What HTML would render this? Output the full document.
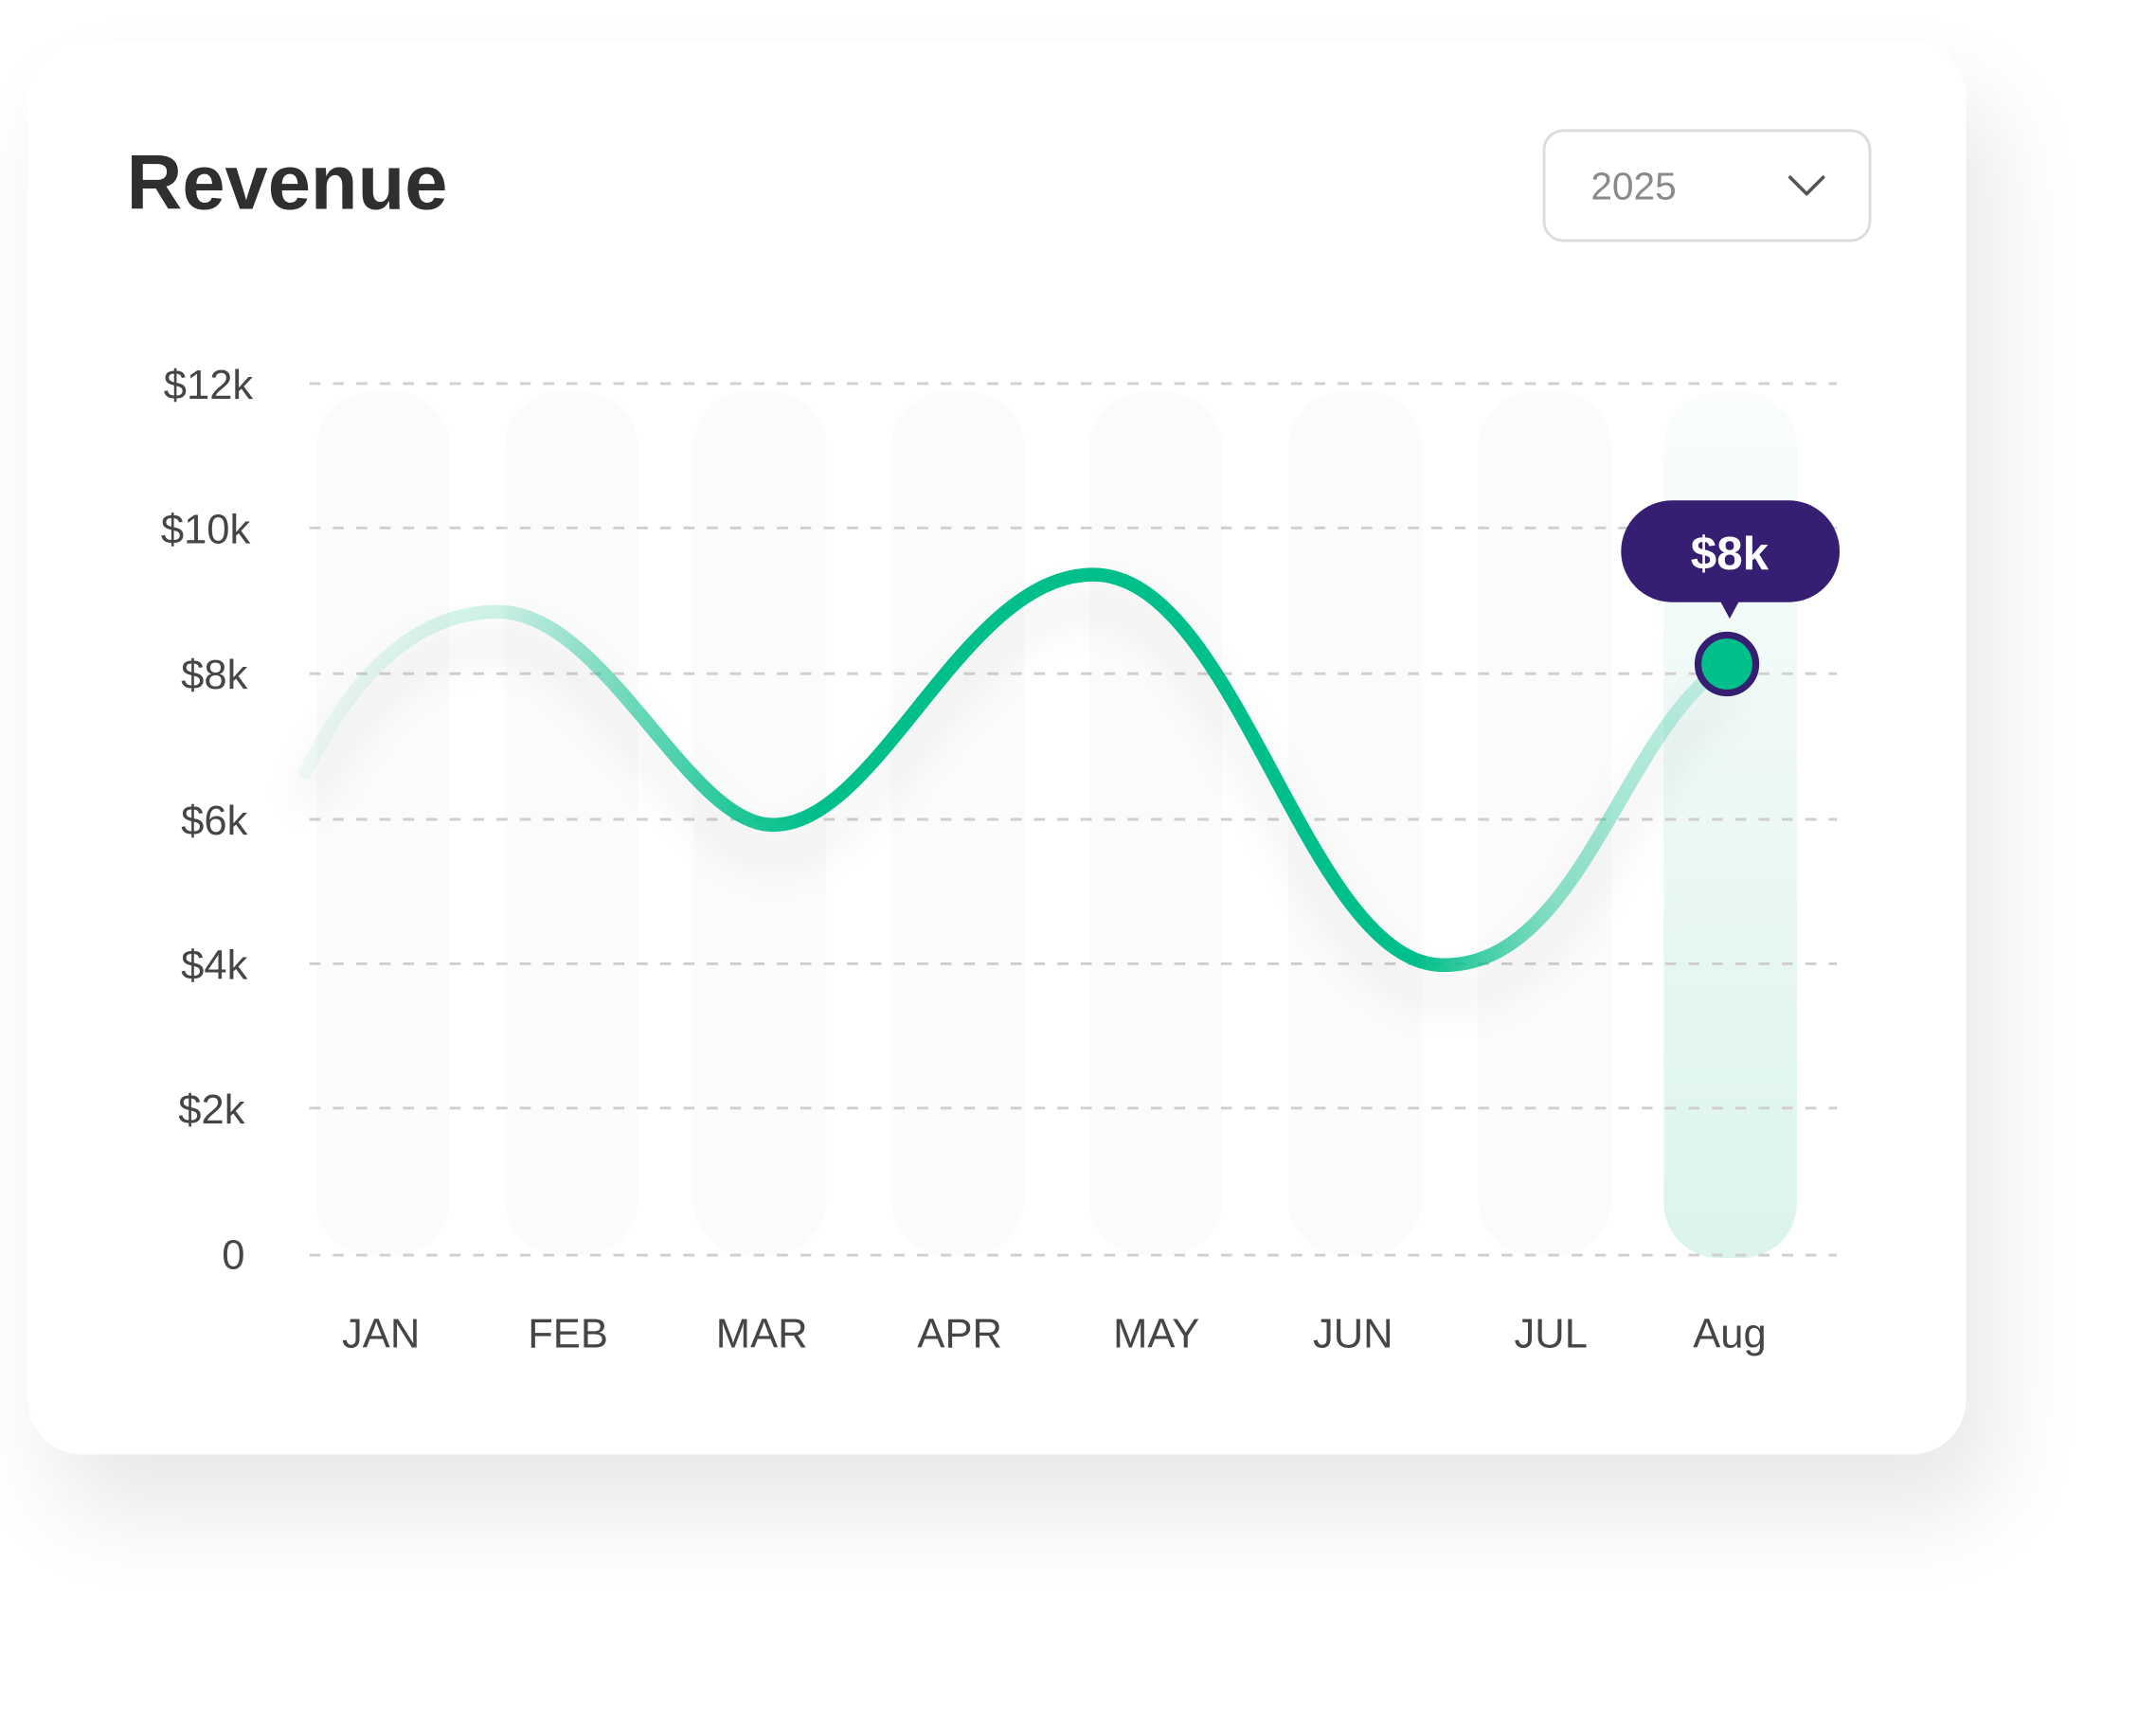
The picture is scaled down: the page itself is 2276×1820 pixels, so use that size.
<!DOCTYPE html>
<html><head><meta charset="utf-8"><style>
html,body{margin:0;padding:0;background:#fff;}
svg{display:block;}
text{font-family:"Liberation Sans",sans-serif;}
</style></head><body>
<svg width="2276" height="1820" viewBox="0 0 1568 1254" xmlns="http://www.w3.org/2000/svg">
<defs>
<filter id="sh" x="-20%" y="-20%" width="140%" height="150%">
<feGaussianBlur stdDeviation="35"/>
</filter>
<filter id="lsh" x="-10%" y="-20%" width="120%" height="160%">
<feGaussianBlur stdDeviation="14"/>
</filter>
<linearGradient id="aug" x1="0" y1="0" x2="0" y2="1">
<stop offset="0" stop-color="#fafcfd"/>
<stop offset="1" stop-color="#dcf4ec"/>
</linearGradient>
<linearGradient id="ln" gradientUnits="userSpaceOnUse" x1="222" y1="0" x2="1256" y2="0">
<stop offset="0" stop-color="#00bf8a" stop-opacity="0.05"/>
<stop offset="0.14" stop-color="#00bf8a" stop-opacity="0.2"/>
<stop offset="0.3" stop-color="#00bf8a" stop-opacity="0.85"/>
<stop offset="0.36" stop-color="#00bf8a" stop-opacity="1"/>
<stop offset="0.78" stop-color="#00bf8a" stop-opacity="1"/>
<stop offset="0.88" stop-color="#00bf8a" stop-opacity="0.45"/>
<stop offset="1" stop-color="#00bf8a" stop-opacity="0.15"/>
</linearGradient>
</defs>
<rect x="40" y="70" width="1410" height="1030" rx="40" fill="#000" opacity="0.09" filter="url(#sh)"/>
<rect x="20" y="30" width="1410" height="1028" rx="40" fill="#fff"/>
<text x="92" y="152" font-size="56" font-weight="700" fill="#2f2f2f">Revenue</text>
<rect x="1123" y="95" width="237" height="80" rx="14" fill="#fff" stroke="#dcdcdc" stroke-width="2"/>
<text x="1157" y="145" font-size="28" fill="#8a8a8a">2025</text>
<path d="M1302 129 L1314 141 L1326 129" fill="none" stroke="#555" stroke-width="2.5" stroke-linecap="round" stroke-linejoin="round"/>
<g fill="#fbfbfb">
<rect x="230" y="285" width="97" height="628" rx="40"/>
<rect x="367" y="285" width="97" height="628" rx="40"/>
<rect x="504" y="285" width="97" height="628" rx="40"/>
<rect x="648" y="285" width="97" height="628" rx="40"/>
<rect x="792" y="285" width="97" height="628" rx="40"/>
<rect x="937" y="285" width="97" height="628" rx="40"/>
<rect x="1075" y="285" width="97" height="628" rx="40"/>
</g>
<rect x="1210" y="285" width="97" height="630" rx="40" fill="url(#aug)"/>
<g stroke="#cfcfcf" stroke-width="2" stroke-dasharray="8 9">
<line x1="225" y1="279" x2="1336" y2="279"/>
<line x1="225" y1="384" x2="1336" y2="384"/>
<line x1="225" y1="490" x2="1336" y2="490"/>
<line x1="225" y1="596" x2="1336" y2="596"/>
<line x1="225" y1="701" x2="1336" y2="701"/>
<line x1="225" y1="806" x2="1336" y2="806"/>
<line x1="225" y1="913" x2="1336" y2="913"/>
</g>
<g font-size="30" fill="#454545" text-anchor="end">
<text x="184" y="290">$12k</text>
<text x="182" y="395">$10k</text>
<text x="180" y="501">$8k</text>
<text x="180" y="607">$6k</text>
<text x="180" y="712">$4k</text>
<text x="178" y="817">$2k</text>
<text x="178" y="923">0</text>
</g>
<g font-size="30" fill="#454545" text-anchor="middle">
<text x="277" y="980">JAN</text>
<text x="413" y="980">FEB</text>
<text x="554" y="980">MAR</text>
<text x="698" y="980">APR</text>
<text x="841" y="980">MAY</text>
<text x="984" y="980">JUN</text>
<text x="1128" y="980">JUL</text>
<text x="1258" y="980">Aug</text>
</g>
<path d="M222 562 C262 480 310 445 362 445 C440 445 500 600 562 600 C640 600 700 418 795 418 C900 418 950 702 1050 702 C1150 702 1180 530 1256 483" fill="none" stroke="#000" stroke-opacity="0.1" stroke-width="10" filter="url(#lsh)" transform="translate(0,22)"/>
<path d="M222 562 C262 480 310 445 362 445 C440 445 500 600 562 600 C640 600 700 418 795 418 C900 418 950 702 1050 702 C1150 702 1180 530 1256 483" fill="none" stroke="url(#ln)" stroke-width="10" stroke-linecap="round"/>
<rect x="1179" y="364" width="159" height="74" rx="37" fill="#361e73"/>
<path d="M1251 437 L1265 437 L1258 450 Z" fill="#361e73"/>
<text x="1258" y="414" font-size="34" font-weight="700" fill="#fff" text-anchor="middle">$8k</text>
<circle cx="1256" cy="483" r="21" fill="#00bf8a" stroke="#361e73" stroke-width="5"/>
</svg>
</body></html>
